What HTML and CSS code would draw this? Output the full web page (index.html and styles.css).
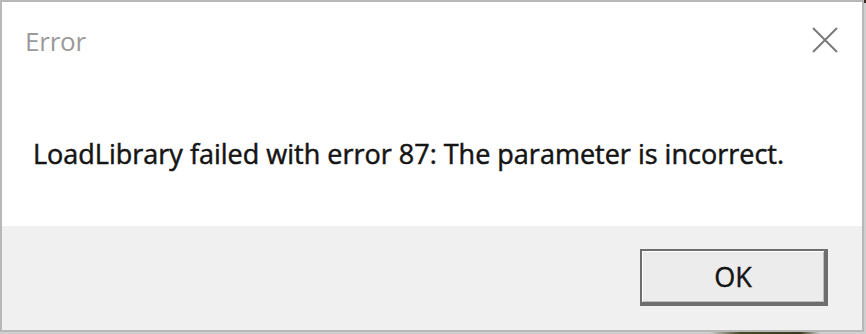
FILE: index.html
```html
<!DOCTYPE html>
<html lang="en">
<head>
<meta charset="utf-8">
<title>Error</title>
<link rel="stylesheet" href="styles.css">
</head>
<body>
<div class="dialog">
  <div class="content">
    <div class="titlebar">
      <span class="title">Error</span>
      <span class="close" aria-label="Close">
        <svg width="26" height="26" viewBox="0 0 26 26"><path d="M1 1 L25 25 M25 1 L1 25" stroke="#7a7a7a" stroke-width="2" fill="none"/></svg>
      </span>
    </div>
    <p class="message">LoadLibrary failed with error 87: The parameter is incorrect.</p>
  </div>
  <div class="footer">
    <button class="ok">OK</button>
  </div>
</div>
</body>
</html>
```
FILE: styles.css
```css
html, body {
  margin: 0;
  padding: 0;
}
body {
  width: 866px;
  height: 334px;
  overflow: hidden;
  background:
    linear-gradient(to right, transparent 0, transparent 600px, #3b2a24 600px) top left / 100% 3px no-repeat,
    linear-gradient(to right, transparent 0, transparent 710px, #4a4a2a 740px, #3a3a22 800px, transparent 820px) bottom left / 100% 3px no-repeat,
    #cfcfcf;
  font-family: "Open Sans", "Noto Sans", sans-serif;
}
.dialog {
  box-sizing: border-box;
  width: 864px;
  height: 332px;
  border: 2px solid #b8b8b8;
  box-shadow: inset 1px 1px 0 #dcdcdc;
  display: flex;
  flex-direction: column;
  background: #fff;
}
.content {
  height: 224px;
  background: #ffffff;
  display: flex;
  flex-direction: column;
}
.titlebar {
  height: 80px;
  display: flex;
  align-items: center;
  justify-content: space-between;
  padding: 0 24px 0 23px;
}
.title {
  font-size: 26px;
  color: #9a9a9a;
  letter-spacing: -0.2px;
  margin-top: -2px;
}
.close {
  display: flex;
  width: 26px;
  height: 26px;
  margin-top: -4px;
}
.message {
  margin: 55px 0 0 31px;
  font-size: 27px;
  line-height: 34px;
  color: #141414;
  font-weight: 400;
  -webkit-text-stroke: 0.5px #141414;
  letter-spacing: 0;
  white-space: nowrap;
}
.footer {
  flex: 1;
  background: #f0f0f0;
  display: flex;
  justify-content: flex-end;
  align-items: flex-start;
  padding: 23px 34px 0 0;
}
.ok {
  box-sizing: border-box;
  width: 188px;
  height: 57px;
  background: #ececec;
  border-style: solid;
  border-color: #6e6e6e;
  border-width: 2px 4px 4px 2px;
  box-shadow: inset 1px 1px 0 #ffffff, inset -1px -1px 0 #bdbdbd;
  font-family: "Open Sans", "Noto Sans", sans-serif;
  font-size: 27px;
  font-weight: 400;
  -webkit-text-stroke: 0.4px #141414;
  color: #141414;
  padding: 0;
}
```
